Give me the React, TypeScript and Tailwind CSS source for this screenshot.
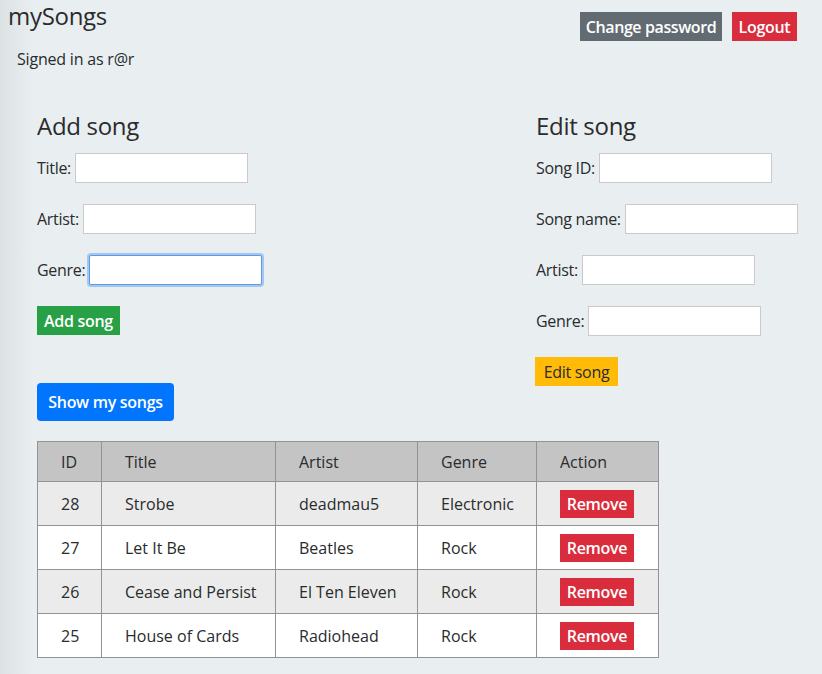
import React from "react";

const songs = [
  { id: 28, title: "Strobe", artist: "deadmau5", genre: "Electronic" },
  { id: 27, title: "Let It Be", artist: "Beatles", genre: "Rock" },
  { id: 26, title: "Cease and Persist", artist: "El Ten Eleven", genre: "Rock" },
  { id: 25, title: "House of Cards", artist: "Radiohead", genre: "Rock" },
];

function Field({ label, focused }: { label: string; focused?: boolean }) {
  return (
    <div className="flex items-center h-[30px] mb-[21px]">
      <span className="mr-[4px] whitespace-nowrap tracking-[-0.3px]">{label}</span>
      <div
        className={
          focused
            ? "w-[173px] h-[30px] bg-white border border-[#5b9be0] shadow-[0_0_0_2px_rgba(110,165,240,0.55)] rounded-[2px]"
            : "w-[173px] h-[30px] bg-white border border-[#cacaca]"
        }
      />
    </div>
  );
}

export default function App() {
  return (
    <div
      className="w-[822px] h-[674px] overflow-hidden text-[#292b2c] text-[16px] bg-[#e9eef1] bg-[linear-gradient(to_right,#dce1e4_0px,#e9eef1_34px)]"
      style={{ fontFamily: '"Open Sans", "Liberation Sans", sans-serif' }}
    >
      <div className="flex justify-between">
        <div>
          <div className="pl-[8px] pt-[1px] text-[24px] leading-[30px] tracking-[-0.3px]">mySongs</div>
          <div className="pl-[17px] pt-[17px] leading-[22px] tracking-[-0.2px]">Signed in as r@r</div>
        </div>
        <div className="flex pt-[12px] pr-[25px] gap-[10px]">
          <div className="w-[142px] h-[29px] bg-[#636b72] text-white font-semibold flex items-center justify-center whitespace-nowrap tracking-[-0.4px]">
            Change password
          </div>
          <div className="w-[65px] h-[29px] bg-[#d92c3c] text-white font-semibold flex items-center justify-center tracking-[-0.3px]">
            Logout
          </div>
        </div>
      </div>

      <div className="flex pl-[37px] pt-[42px]">
        <div className="w-[499px]">
          <div className="text-[24px] leading-[28px] mb-[13px] font-medium tracking-[-0.3px]">Add song</div>
          <Field label="Title:" />
          <Field label="Artist:" />
          <Field label="Genre:" focused />
          <div className="w-[83px] h-[29px] bg-[#28a045] text-white font-semibold flex items-center justify-center whitespace-nowrap tracking-[-0.3px]">
            Add song
          </div>
          <div className="mt-[48px] w-[137px] h-[38px] rounded-[4px] bg-[#0275ff] text-white font-semibold flex items-center justify-center whitespace-nowrap tracking-[-0.3px]">
            Show my songs
          </div>
        </div>
        <div>
          <div className="text-[24px] leading-[28px] mb-[13px] font-medium tracking-[-0.3px]">Edit song</div>
          <Field label="Song ID:" />
          <Field label="Song name:" />
          <Field label="Artist:" />
          <Field label="Genre:" />
          <div className="w-[83px] h-[29px] bg-[#ffbb08] flex items-center justify-center whitespace-nowrap tracking-[-0.3px] -ml-[1px]">
            Edit song
          </div>
        </div>
      </div>

      <div className="pl-[37px] pt-[20px]">
        <table className="border-collapse border border-[#939393] w-[621px] table-fixed">
          <colgroup>
            <col className="w-[64px]" />
            <col className="w-[174px]" />
            <col className="w-[142px]" />
            <col className="w-[119px]" />
            <col className="w-[122px]" />
          </colgroup>
          <thead>
            <tr className="bg-[#c4c4c4] h-[40px]">
              {["ID", "Title", "Artist", "Genre", "Action"].map((h) => (
                <th key={h} className="border border-[#939393] text-left font-normal pl-[23px] p-0 whitespace-nowrap">
                  {h}
                </th>
              ))}
            </tr>
          </thead>
          <tbody>
            {songs.map((s, i) => (
              <tr key={s.id} className={i % 2 === 0 ? "bg-[#ebebeb] h-[44px]" : "bg-white h-[44px]"}>
                <td className="border border-[#939393] pl-[23px] p-0">{s.id}</td>
                <td className="border border-[#939393] pl-[23px] p-0 whitespace-nowrap">{s.title}</td>
                <td className="border border-[#939393] pl-[23px] p-0 whitespace-nowrap">{s.artist}</td>
                <td className="border border-[#939393] pl-[23px] p-0">{s.genre}</td>
                <td className="border border-[#939393] pl-[23px] p-0">
                  <div className="w-[74px] h-[28px] bg-[#d92c3c] text-white font-semibold flex items-center justify-center tracking-[-0.3px]">
                    Remove
                  </div>
                </td>
              </tr>
            ))}
          </tbody>
        </table>
      </div>
    </div>
  );
}
